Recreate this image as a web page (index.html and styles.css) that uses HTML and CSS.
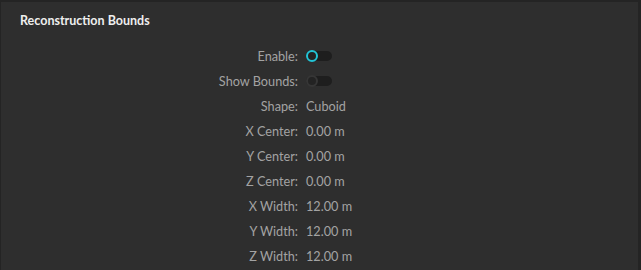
FILE: index.html
```html
<!DOCTYPE html>
<html lang="en">
<head>
    <meta charset="UTF-8">
    <title>Reconstruction Bounds</title>
    <link rel="stylesheet" href="styles.css">
</head>
<body>

    <div class="panel">
        <div class="panel-title">Reconstruction Bounds</div>

        <div class="props">
            <div class="label">Enable:</div>
            <div class="value"><span class="toggle on"><span class="knob"></span></span></div>

            <div class="label">Show Bounds:</div>
            <div class="value"><span class="toggle"><span class="knob"></span></span></div>

            <div class="label">Shape:</div>
            <div class="value">Cuboid</div>

            <div class="label">X Center:</div>
            <div class="value">0.00 m</div>

            <div class="label">Y Center:</div>
            <div class="value">0.00 m</div>

            <div class="label">Z Center:</div>
            <div class="value">0.00 m</div>

            <div class="label">X Width:</div>
            <div class="value">12.00 m</div>

            <div class="label">Y Width:</div>
            <div class="value">12.00 m</div>

            <div class="label">Z Width:</div>
            <div class="value">12.00 m</div>
        </div>
    </div>

</body>
</html>
```

FILE: styles.css
```css
body {
    margin: 0;
    background-color: #242424;
    font-family: Lato, "Liberation Sans", sans-serif;
}

.panel {
    margin: 2px 3px 0 1px;
    height: 268px;
    background-color: #2e2e2e;
    overflow: hidden;
}

.panel-title {
    padding: 11px 0 0 19px;
    height: 21px;
    font-size: 12.5px;
    font-weight: bold;
    color: #eeeeee;
}

.props {
    display: grid;
    grid-template-columns: 297px 1fr;
    column-gap: 8px;
    grid-auto-rows: 25px;
    margin-top: 9px;
    font-size: 12.7px;
    color: #a3a3a3;
}

.label,
.value {
    display: flex;
    align-items: center;
}

.label {
    justify-content: flex-end;
}

.toggle {
    position: relative;
    display: inline-block;
    width: 26px;
    height: 10px;
    border-radius: 5px;
    background-color: #1e1e1e;
}

.knob {
    position: absolute;
    left: 0;
    top: -1px;
    width: 8px;
    height: 8px;
    border: 2px solid #363636;
    border-radius: 50%;
    background-color: #232323;
}

.toggle.on .knob {
    border-color: #22c4d6;
}
```
